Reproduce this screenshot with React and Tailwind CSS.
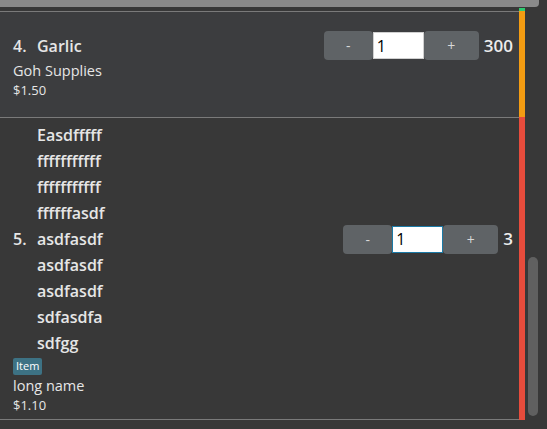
const font = { fontFamily: '"Open Sans", "Noto Sans", sans-serif' };

function Qty({ value, focused }) {
  return (
    <div className="flex items-center">
      <div className="flex items-center">
        <button className="flex h-[29px] w-[49px] items-center justify-center rounded-[4px] bg-[#5f6366] text-[14px] text-[#d8d8d8]">
          -
        </button>
        <input
          readOnly
          value="1"
          className={
            'h-[27px] w-[51px] bg-white px-[3px] text-[16px] leading-none text-black outline-none ' +
            (focused ? 'border border-[#1b7aa6]' : 'border border-[#d0d0d0]')
          }
        />
        <button className="flex h-[29px] w-[55px] items-center justify-center rounded-[4px] bg-[#5f6366] text-[14px] text-[#d8d8d8]">
          +
        </button>
      </div>
      <span className="ml-[5px] text-[17px] font-semibold text-[#ececec]">{value}</span>
    </div>
  );
}

const longName = [
  'Easdfffff',
  'fffffffffff',
  'fffffffffff',
  'ffffffasdf',
  'asdfasdf',
  'asdfasdf',
  'asdfasdf',
  'sdfasdfa',
  'sdfgg',
];

export default function App() {
  return (
    <div className="relative h-[429px] w-[547px] overflow-hidden bg-[#383838] text-[#e6e6e6]" style={font}>
      <div className="h-[7px] w-[539px] rounded-br-[4px] bg-[#8a8a8a]" />
      <div className="h-[1px]" />

      {/* tail of previous row */}
      <div className="flex h-[3px]">
        <div className="w-[519px]" />
        <div className="w-[6px] bg-[#2ecc71]" />
      </div>

      {/* row 4 */}
      <div className="flex">
        <div className="h-[106px] w-[519px] border-t border-[#7a7a7a] bg-[#3c3d3f] pl-[13px] pr-[6px] pt-[19px]">
          <div className="flex h-[29px] items-center justify-between">
            <div className="flex items-center text-[16px] font-semibold leading-[26px]">
              <span className="w-[24px]">4.</span>
              <span>Garlic</span>
            </div>
            <Qty value="300" />
          </div>
          <div className="mt-[1px] text-[14.5px] leading-[20px]">Goh Supplies</div>
          <div className="text-[13px] leading-[18px]">$1.50</div>
        </div>
        <div className="w-[6px] bg-[#f39c12]" />
      </div>

      {/* row 5 */}
      <div className="flex">
        <div className="h-[303px] w-[519px] border-y border-[#7a7a7a] pl-[13px] pr-[6px] pt-[4px]">
          <div className="flex items-center justify-between">
            <div className="flex items-center text-[16px] font-semibold leading-[26px]">
              <span className="w-[24px]">5.</span>
              <div className="flex flex-col">
                {longName.map((l, i) => (
                  <span key={i}>{l}</span>
                ))}
              </div>
            </div>
            <Qty value="3" focused />
          </div>
          <div className="mt-[2px] flex">
            <span className="flex h-[17px] items-center rounded-[2px] bg-[#3d7284] px-[3px] text-[11px] text-white">
              Item
            </span>
          </div>
          <div className="mt-[1px] text-[14.5px] leading-[20px]">long name</div>
          <div className="text-[13px] leading-[18px]">$1.10</div>
        </div>
        <div className="w-[6px] bg-[#e74c3c]" />
      </div>

      {/* scrollbar thumb */}
      <div className="absolute left-[528px] top-[257px] h-[159px] w-[10px] rounded-full bg-[#606060]" />
    </div>
  );
}
